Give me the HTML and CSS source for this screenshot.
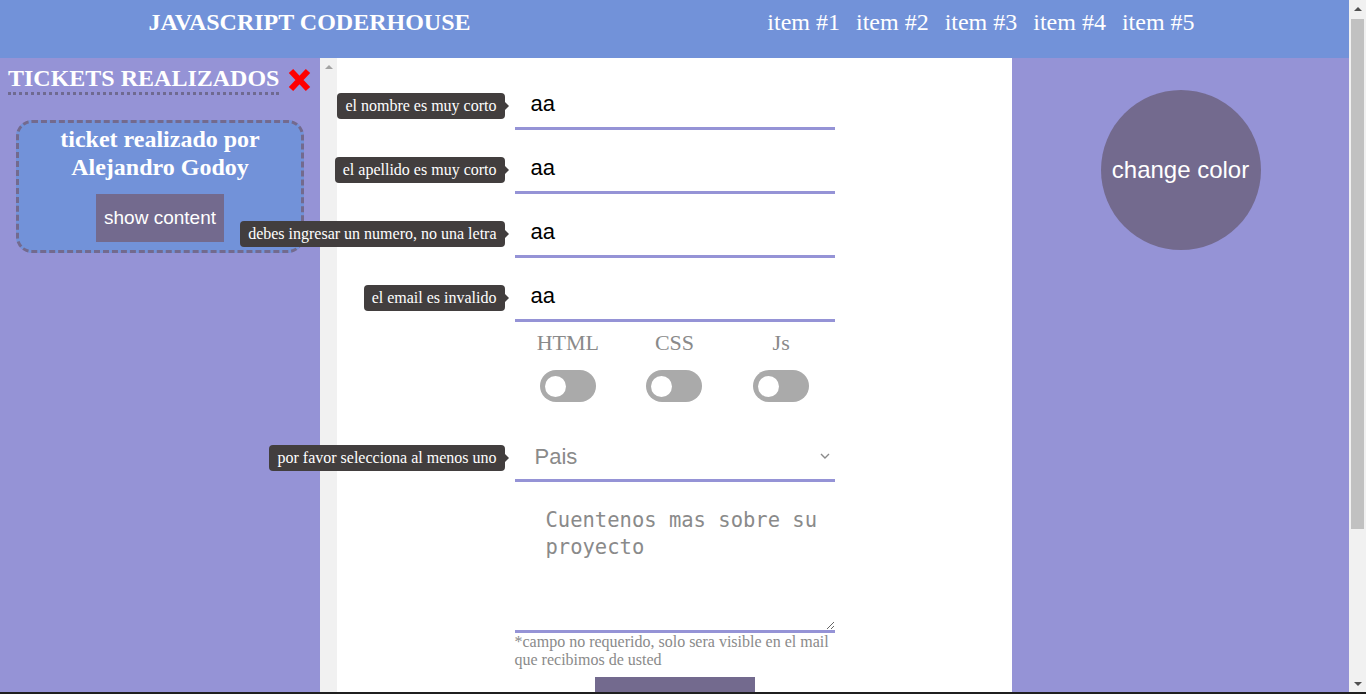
FILE: index.html
```html
<!DOCTYPE html>
<html lang="es">
<head>
<meta charset="utf-8">
<title>Javascript Coderhouse</title>
<link rel="stylesheet" href="styles.css">
</head>
<body>
<div class="window">
  <div class="viewport">
    <div class="page">
      <header class="topbar">
        <h1 class="brand">JAVASCRIPT CODERHOUSE</h1>
        <nav>
          <ul class="menu">
            <li>item #1</li>
            <li>item #2</li>
            <li>item #3</li>
            <li>item #4</li>
            <li>item #5</li>
          </ul>
        </nav>
      </header>
      <main class="content">
        <aside class="tickets">
          <div class="tickets-head">
            <h2 class="tickets-title">TICKETS REALIZADOS</h2>
            <svg class="close-icon" width="25" height="24" viewBox="0 0 25 24" aria-hidden="true">
              <path d="M4 3 L21 21 M21 3 L4 21" stroke="#f00" stroke-width="6" stroke-linecap="butt" fill="none"/>
            </svg>
          </div>
          <div class="ticket-card">
            <h3 class="ticket-title">ticket realizado por<br>Alejandro Godoy</h3>
            <button class="btn-show" type="button">show content</button>
          </div>
        </aside>

        <section class="form-pane">
          <div class="inner-scrollbar"><span class="arrow-up-light"></span></div>
          <div class="form-scroll">
            <form class="contact-form">
              <div class="field">
                <input class="text-input" type="text" value="aa">
                <span class="tip">el nombre es muy corto</span>
              </div>
              <div class="field">
                <input class="text-input" type="text" value="aa">
                <span class="tip">el apellido es muy corto</span>
              </div>
              <div class="field">
                <input class="text-input" type="text" value="aa">
                <span class="tip">debes ingresar un numero, no una letra</span>
              </div>
              <div class="field">
                <input class="text-input" type="text" value="aa">
                <span class="tip">el email es invalido</span>
              </div>

              <div class="checks">
                <div class="check">
                  <span class="check-label">HTML</span>
                  <span class="switch"><span class="knob"></span></span>
                </div>
                <div class="check">
                  <span class="check-label">CSS</span>
                  <span class="switch"><span class="knob"></span></span>
                </div>
                <div class="check">
                  <span class="check-label">Js</span>
                  <span class="switch"><span class="knob"></span></span>
                </div>
              </div>

              <div class="field">
                <select class="select-input">
                  <option>Pais</option>
                </select>
                <svg class="chevron" width="10" height="6" viewBox="0 0 10 6" aria-hidden="true">
                  <polyline points="1,1 5,5 9,1" fill="none" stroke="#8a8a8a" stroke-width="1.4"/>
                </svg>
                <span class="tip">por favor selecciona al menos uno</span>
              </div>

              <textarea class="text-area" placeholder="Cuentenos mas sobre su proyecto"></textarea>
              <p class="note">*campo no requerido, solo sera visible en el mail que recibimos de usted</p>
              <button class="btn-send" type="button" aria-label="Enviar"></button>
            </form>
          </div>
        </section>

        <aside class="color-pane">
          <button class="btn-color" type="button">change color</button>
        </aside>
      </main>
    </div>
    <div class="page-scrollbar">
      <span class="sb-btn"><span class="arrow-up-dark"></span></span>
      <span class="sb-thumb"></span>
      <span class="sb-track"></span>
      <span class="sb-btn"><span class="arrow-down-dark"></span></span>
    </div>
  </div>
  <div class="bottom-edge"></div>
</div>
</body>
</html>
```

FILE: styles.css
```css
* { box-sizing: border-box; }

html, body {
  margin: 0;
  padding: 0;
  overflow: hidden;
  font-family: "Liberation Serif", "Times New Roman", serif;
}

.window {
  width: 1366px;
  height: 694px;
  display: flex;
  flex-direction: column;
  overflow: hidden;
}

.viewport {
  height: 692px;
  display: flex;
}

.page {
  flex: 1;
  display: flex;
  flex-direction: column;
  min-width: 0;
}

/* header */
.topbar {
  height: 58px;
  flex: none;
  background: #7292d9;
  display: flex;
  justify-content: space-around;
  align-items: flex-start;
  padding: 8px 6px 0 0;
  color: #fff;
}

.brand {
  margin: 0;
  font-size: 24px;
  line-height: 28px;
  font-weight: bold;
}

.menu {
  list-style: none;
  margin: 0;
  padding: 0;
  display: flex;
  gap: 16px;
  font-size: 24px;
  line-height: 28px;
}

/* content */
.content {
  flex: 1;
  display: flex;
  min-height: 0;
}

.tickets {
  width: 320px;
  flex: none;
  background: #9593d6;
  padding-top: 6px;
}

.tickets-head {
  display: flex;
  align-items: center;
  gap: 8px;
  padding-left: 8px;
}

.tickets-title {
  margin: 0;
  font-size: 24px;
  line-height: 28px;
  font-weight: bold;
  color: #fff;
  border-bottom: 3px dotted #6f6a90;
}

.close-icon { display: block; }

.ticket-card {
  margin: 25px 16px 0;
  background: #7292d9;
  border: 3px dashed #736a8e;
  border-radius: 16px;
  padding: 2px 8px 8px;
  text-align: center;
}

.ticket-title {
  margin: 0;
  font-size: 24px;
  line-height: 28px;
  font-weight: bold;
  color: #fff;
}

.btn-show {
  margin-top: 13px;
  width: 128px;
  height: 48px;
  border: none;
  padding: 0;
  background: #736a8e;
  color: #fff;
  font-family: "Liberation Sans", Arial, sans-serif;
  font-size: 19px;
}

/* middle form */
.form-pane {
  width: 692px;
  flex: none;
  display: flex;
}

.inner-scrollbar {
  width: 17px;
  flex: none;
  background: #f1f1f1;
  display: flex;
  justify-content: center;
  padding-top: 7px;
}

.arrow-up-light {
  width: 0;
  height: 0;
  border-left: 4px solid transparent;
  border-right: 4px solid transparent;
  border-bottom: 4px solid #a3a3a3;
}

.form-scroll {
  flex: 1;
  background: #fff;
  padding-top: 21px;
}

.contact-form {
  width: 320px;
  margin: 0 auto;
  display: flex;
  flex-direction: column;
}

.field {
  position: relative;
  margin-bottom: 13px;
}

.text-input,
.select-input {
  display: block;
  width: 320px;
  height: 51px;
  border: 0;
  border-bottom: 3px solid #9593d6;
  background: #fff;
  outline: none;
  font-family: "Liberation Sans", Arial, sans-serif;
  font-size: 22px;
  color: #000;
  padding: 2px 16px 0;
  border-radius: 0;
}

.select-input {
  appearance: none;
  -webkit-appearance: none;
  color: #8a8a8a;
  padding: 2px 20px 0;
}

.chevron {
  position: absolute;
  right: 5px;
  top: 22px;
}

.tip {
  position: absolute;
  right: calc(100% + 10px);
  top: 14px;
  background: #423e3e;
  color: #fff;
  font-size: 16px;
  line-height: 18px;
  padding: 4px 8px;
  border-radius: 4px;
  white-space: nowrap;
}

.tip::after {
  content: "";
  position: absolute;
  left: 100%;
  top: 50%;
  margin-top: -4px;
  border-top: 4px solid transparent;
  border-bottom: 4px solid transparent;
  border-left: 4px solid #423e3e;
}

.checks {
  display: grid;
  grid-template-columns: repeat(3, 1fr);
  margin: -5px 0 29px;
}

.check {
  display: flex;
  flex-direction: column;
  align-items: center;
}

.check-label {
  font-size: 22px;
  line-height: 25px;
  color: #8a8a8a;
}

.switch {
  margin-top: 15px;
  width: 56px;
  height: 32px;
  border-radius: 16px;
  background: #aaa;
  display: flex;
  align-items: center;
  padding-left: 5px;
}

.knob {
  width: 21px;
  height: 21px;
  border-radius: 50%;
  background: #fff;
}

.text-area {
  display: block;
  width: 320px;
  height: 138px;
  border: 0;
  border-bottom: 3px solid #9593d6;
  outline: none;
  padding: 12px 12px 10px 31px;
  font-family: "DejaVu Sans Mono", "Liberation Mono", monospace;
  font-size: 20.5px;
  line-height: 27px;
  color: #000;
  background: #fff;
}

.text-area::placeholder {
  color: #8a8a8a;
}

.note {
  margin: 0;
  font-size: 16px;
  line-height: 18px;
  color: #8a8a8a;
}

.btn-send {
  align-self: center;
  margin-top: 8px;
  width: 160px;
  height: 60px;
  border: none;
  background: #736a8e;
  padding: 0;
}

/* right pane */
.color-pane {
  flex: 1;
  background: #9593d6;
  display: flex;
  justify-content: center;
  align-items: flex-start;
  padding-top: 32px;
}

.btn-color {
  width: 160px;
  height: 160px;
  border-radius: 50%;
  border: none;
  background: #736a8e;
  color: #fff;
  font-family: "Liberation Sans", Arial, sans-serif;
  font-size: 24px;
  padding: 0;
}

/* page scrollbar */
.page-scrollbar {
  width: 17px;
  flex: none;
  background: #f1f1f1;
  display: flex;
  flex-direction: column;
  align-items: center;
}

.sb-btn {
  height: 17px;
  width: 17px;
  flex: none;
  display: flex;
  align-items: center;
  justify-content: center;
}

.sb-thumb {
  width: 13px;
  height: 510px;
  flex: none;
  margin-top: 2px;
  background: #c1c1c1;
}

.sb-track { flex: 1; }

.arrow-up-dark,
.arrow-down-dark {
  width: 0;
  height: 0;
  border-left: 4px solid transparent;
  border-right: 4px solid transparent;
}

.arrow-up-dark { border-bottom: 4px solid #505050; }
.arrow-down-dark { border-top: 4px solid #505050; }

.bottom-edge {
  height: 2px;
  flex: none;
  background: #1f1f1f;
}
```
